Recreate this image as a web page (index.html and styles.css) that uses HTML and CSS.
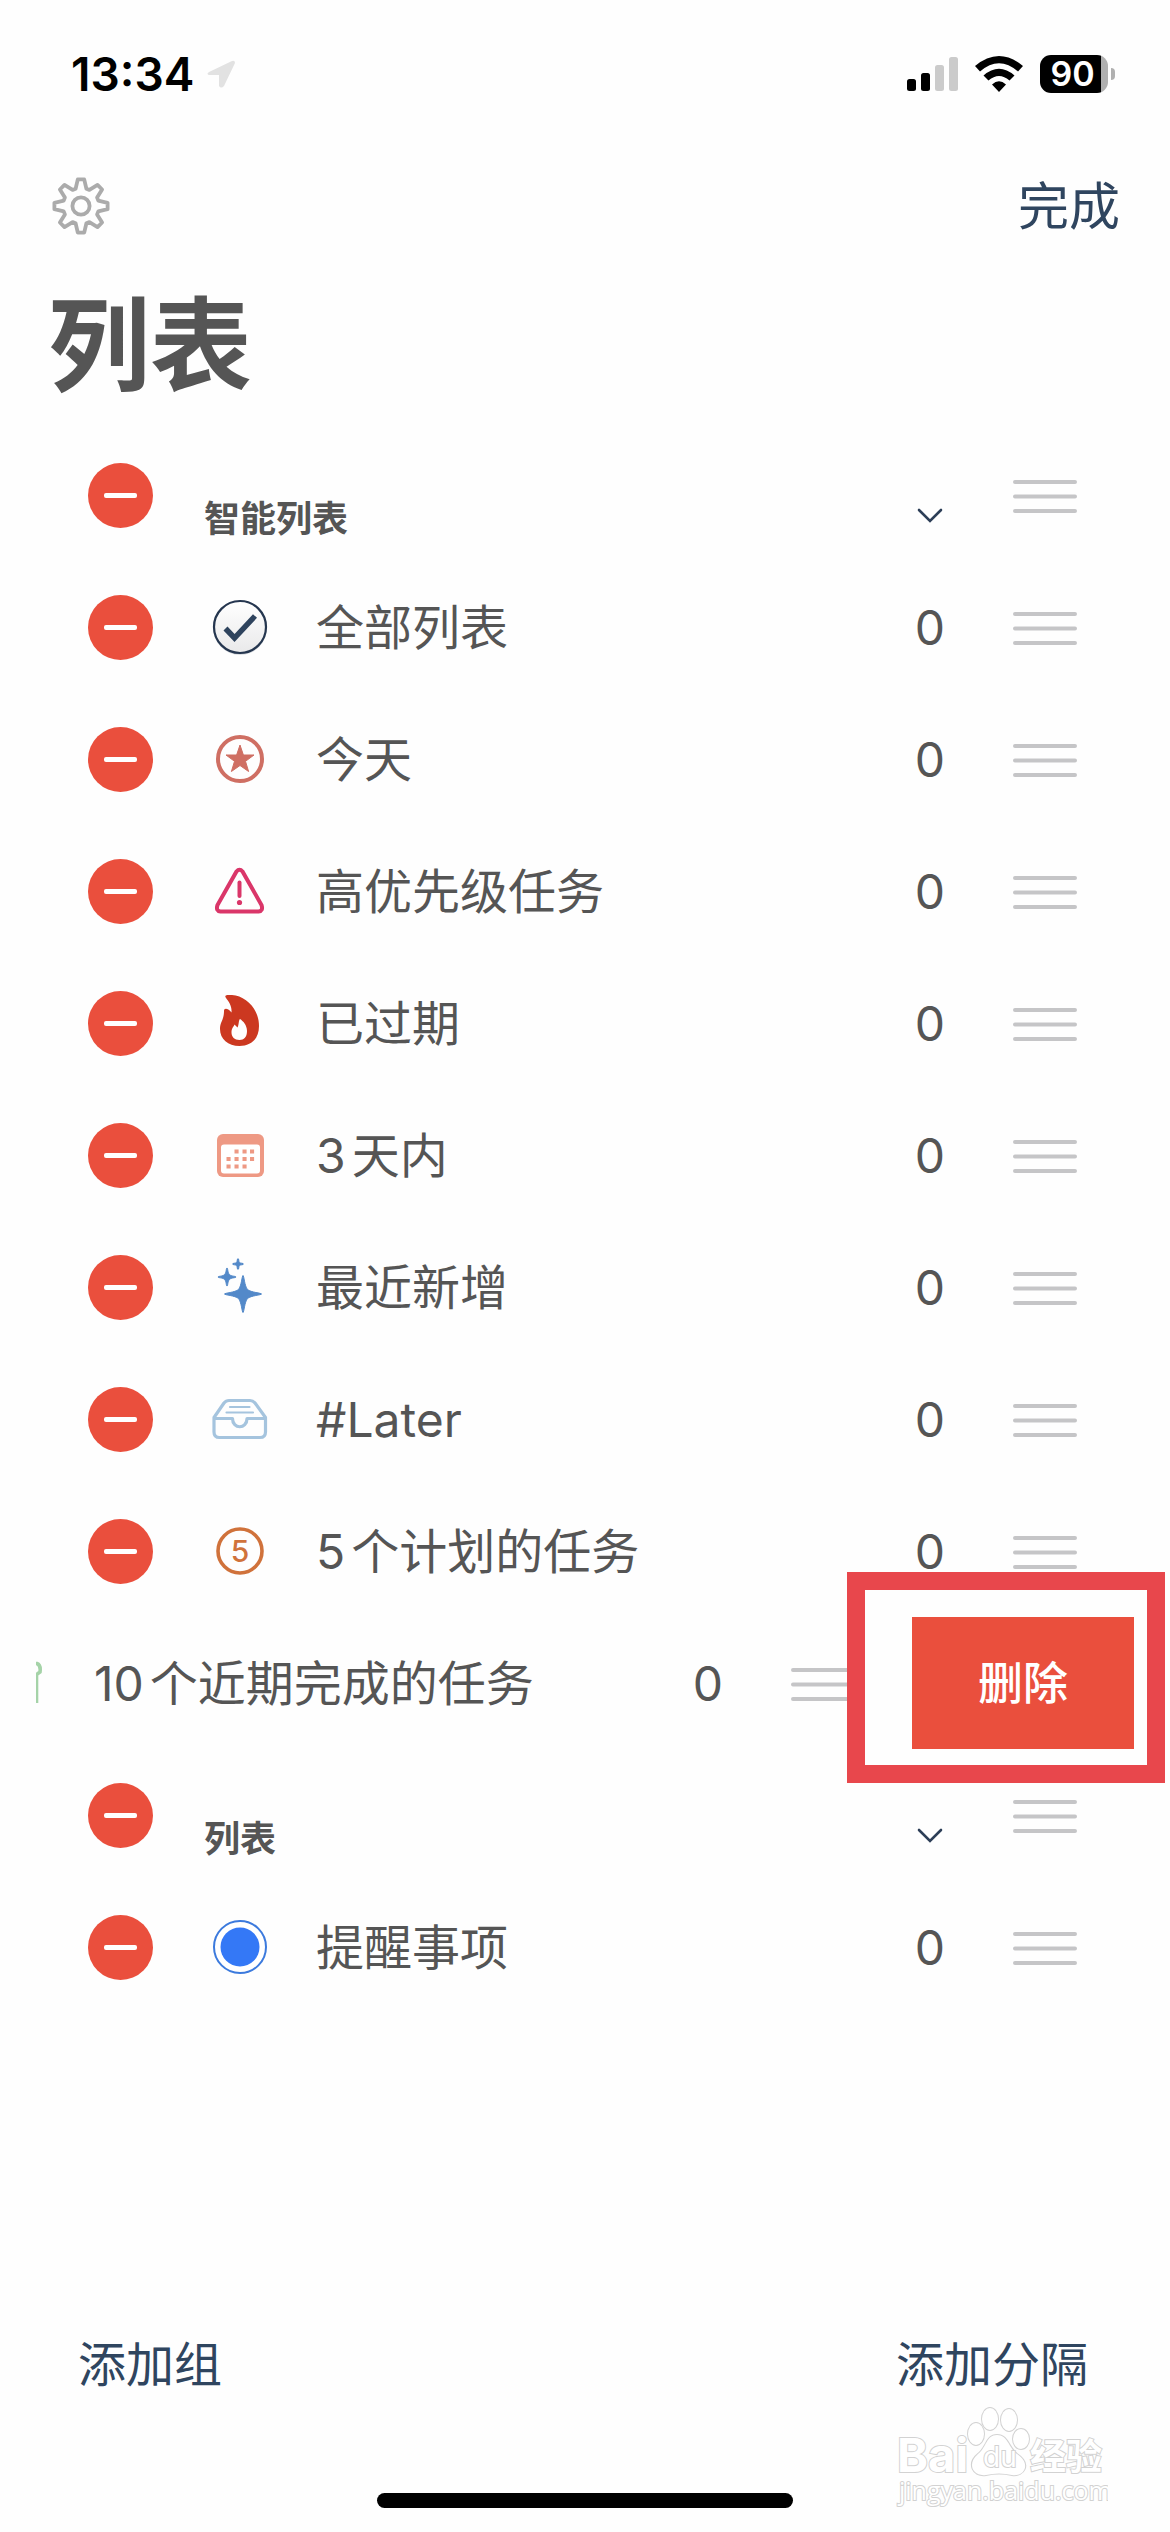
FILE: index.html
```html
<!DOCTYPE html>
<html lang="zh-CN">
<head>
<meta charset="utf-8">
<meta name="viewport" content="width=device-width, initial-scale=1">
<title>列表</title>
<link rel="stylesheet" href="styles.css">
</head>
<body>
<svg class="sprite" aria-hidden="true">
  <symbol id="minus" viewBox="0 0 65 65"><circle cx="32.5" cy="32.5" r="32.5" fill="#ea4f3d"/><rect x="16" y="30" width="33" height="5" rx="2" fill="#fff"/></symbol>
  <symbol id="grip" viewBox="0 0 64 34"><path d="M2 3H62M2 17.500H62M2 32H62" fill="none" stroke="#c5c5c7" stroke-width="4" stroke-linecap="round"/></symbol>
  <symbol id="chevron" viewBox="0 0 26 16"><path d="M2 2 13 13 24 2" fill="none" stroke="#2c3e57" stroke-width="2.600" stroke-linecap="round"/></symbol>
</svg>

<header class="status">
  <div class="status-left">
    <time class="clock">13:34</time>
    <svg class="location" viewBox="0 0 28 28" aria-hidden="true"><path d="M25 1 2 12Q-1 14 2 15H12V26Q14 29 17 26L28 3Q28 0 25 1Z" fill="#e2e2e2"/></svg>
  </div>
  <div class="status-right">
    <svg class="signal" viewBox="0 0 51 34" aria-hidden="true"><rect y="22" width="9" height="12" rx="2.500"/><rect x="14" y="16" width="9" height="18" rx="2.500"/><g fill="#cbcbcb"><rect x="28" y="8" width="9" height="26" rx="2.500"/><rect x="42" width="9" height="34" rx="2.500"/></g></svg>
    <svg class="wifi" viewBox="0 0 48 36" aria-hidden="true"><path d="M0 10Q24-10 48 10L43 15.500Q24-1 5 15.500ZM8.500 19.500Q24 6 39.500 19.500L34.500 24.500Q24 15.500 13.500 24.500ZM17 28.500Q24 22 31 28.500L24 36Z"/></svg>
    <div class="battery"><span class="battery-body">90</span><span class="battery-tip"></span></div>
  </div>
</header>

<nav class="toolbar">
  <button class="icon-button" type="button" aria-label="设置">
    <svg class="gear" viewBox="-29 -29 58 58"><g fill="none" stroke="#ababab" stroke-width="3.800" stroke-linejoin="round"><circle r="8.600"/><path d="M-3.200-26.600 3.200-26.600 5.400-17.300 8.400-16.100 16.500-21.100 21.100-16.500 16.100-8.400 17.300-5.400 26.600-3.200 26.600 3.200 17.300 5.400 16.100 8.400 21.100 16.500 16.500 21.100 8.400 16.100 5.400 17.300 3.200 26.600-3.200 26.600-5.400 17.300-8.400 16.100-16.500 21.100-21.100 16.500-16.100 8.400-17.300 5.400-26.600 3.200-26.600-3.200-17.300-5.400-16.100-8.400-21.100-16.500-16.500-21.100-8.400-16.100-5.400-17.300Z"/></g></svg>
  </button>
  <button class="text-button done" type="button">完成</button>
</nav>

<main>
  <h1 class="page-title">列表</h1>
  <ul class="lists">
    <li class="row group">
      <button class="remove" type="button" aria-label="删除 智能列表"><svg><use href="#minus"/></svg></button>
      <h2 class="group-name">智能列表</h2>
      <button class="fold" type="button" aria-label="折叠"><svg><use href="#chevron"/></svg></button>
      <svg class="grip" aria-hidden="true"><use href="#grip"/></svg>
    </li>
    <li class="row">
      <button class="remove" type="button" aria-label="删除 全部列表"><svg><use href="#minus"/></svg></button>
      <svg class="icon" viewBox="0 0 60 60" aria-hidden="true"><defs><linearGradient id="disc" x2="0" y2="1"><stop stop-color="#fff"/><stop offset="1" stop-color="#e9e9ea"/></linearGradient></defs><circle cx="30" cy="31" r="27" fill="#d9dce0"/><circle cx="30" cy="30" r="26" fill="url(#disc)" stroke="#25364f" stroke-width="2.200"/><path d="M15.500 31.500 24.500 41 45 19" fill="none" stroke="#2e435d" stroke-width="5.500"/></svg>
      <span class="name">全部列表</span><span class="count">0</span>
      <svg class="grip" aria-hidden="true"><use href="#grip"/></svg>
    </li>
    <li class="row">
      <button class="remove" type="button" aria-label="删除 今天"><svg><use href="#minus"/></svg></button>
      <svg class="icon" viewBox="0 0 60 60" aria-hidden="true"><circle cx="30" cy="30" r="22" fill="none" stroke="#cf6f63" stroke-width="4"/><path d="M30 16 33.400 26H44L35.500 32.300 38.600 42.500 30 36.500 21.400 42.500 24.500 32.300 16 26H26.600Z" fill="#cf6f63" stroke="#cf6f63" stroke-linejoin="round"/></svg>
      <span class="name">今天</span><span class="count">0</span>
      <svg class="grip" aria-hidden="true"><use href="#grip"/></svg>
    </li>
    <li class="row">
      <button class="remove" type="button" aria-label="删除 高优先级任务"><svg><use href="#minus"/></svg></button>
      <svg class="icon" viewBox="0 0 60 60" aria-hidden="true"><g fill="none" stroke="#da3669" stroke-width="4" stroke-linecap="round"><path d="M26.500 10.500Q29.500 7 32.500 10.500L51.500 44Q53.500 50 48.500 50.500H10.500Q5.500 50 7.500 44Z"/><path d="M29.500 21.500V35"/></g><circle cx="29.500" cy="41.500" r="2.600" fill="#da3669"/></svg>
      <span class="name">高优先级任务</span><span class="count">0</span>
      <svg class="grip" aria-hidden="true"><use href="#grip"/></svg>
    </li>
    <li class="row">
      <button class="remove" type="button" aria-label="删除 已过期"><svg><use href="#minus"/></svg></button>
      <svg class="icon" viewBox="0 0 60 60" aria-hidden="true"><path d="M16 5C13 1 20 2 22 2C36 3 49 16 49 33C49 46 41 53 29.500 53C18 53 10 46 10 36C10 29 14 27 14 18C14 14 19 16 21.500 19.500C22 13 19 9 16 5Z" fill="#cc3820"/><path d="M30 26C33 28 37 32 37 38C37 44 34 47 29.500 47C24.500 47 21.500 44 21.500 39.500C21.500 35 23.500 34 24.500 31.500L27.500 34.500C29 32 28.500 27 30 26Z" fill="#fff"/></svg>
      <span class="name">已过期</span><span class="count">0</span>
      <svg class="grip" aria-hidden="true"><use href="#grip"/></svg>
    </li>
    <li class="row">
      <button class="remove" type="button" aria-label="删除 3天内"><svg><use href="#minus"/></svg></button>
      <svg class="icon" viewBox="0 0 60 60" aria-hidden="true"><rect x="7" y="9" width="47" height="43" rx="6" fill="#ee9984"/><rect x="11" y="19.500" width="39" height="29" rx="3" fill="#fff"/><path d="M26.500 26.500h.1M34.500 26.500h.1M42 26.500h.1M18.500 34h.1M26.500 34h.1M34.500 34h.1M42 34h.1M18.500 41.500h.1M26.500 41.500h.1M34.500 41.500h.1" stroke="#ee9984" stroke-width="4" stroke-linecap="square"/></svg>
      <span class="name">3天内</span><span class="count">0</span>
      <svg class="grip" aria-hidden="true"><use href="#grip"/></svg>
    </li>
    <li class="row">
      <button class="remove" type="button" aria-label="删除 最近新增"><svg><use href="#minus"/></svg></button>
      <svg class="icon" viewBox="0 0 60 60" aria-hidden="true"><path d="M33 18.500C34 18.500 34.500 29 37.500 32.500C41 35.500 51.500 36 51.500 37C51.500 38 41 38.500 37.500 41.500C34.500 45 34 55.500 33 55.500C32 55.500 31.500 45 28.500 41.500C25 38.500 14.500 38 14.500 37C14.500 36 25 35.500 28.500 32.500C31.500 29 32 18.500 33 18.500ZM17 11C18 11 17.500 16 19.500 17.500C21 19.500 26 19 26 20C26 21 21 20.500 19.500 22.500C17.500 24 18 29 17 29C16 29 16.500 24 14.500 22.500C13 20.500 8 21 8 20C8 19 13 19.500 14.500 17.500C16.500 16 16 11 17 11ZM28 1.500C29 1.500 28.500 4.500 29.500 5.500C30.500 6.500 33.500 6 33.500 7C33.500 8 30.500 7.500 29.500 8.500C28.500 9.500 29 12.500 28 12.500C27 12.500 27.500 9.500 26.500 8.500C25.500 7.500 22.500 8 22.500 7C22.500 6 25.500 6.500 26.500 5.500C27.500 4.500 27 1.500 28 1.500Z" fill="#5389c9" stroke="#5389c9"/></svg>
      <span class="name">最近新增</span><span class="count">0</span>
      <svg class="grip" aria-hidden="true"><use href="#grip"/></svg>
    </li>
    <li class="row">
      <button class="remove" type="button" aria-label="删除 #Later"><svg><use href="#minus"/></svg></button>
      <svg class="icon" viewBox="0 0 60 60" aria-hidden="true"><g fill="none" stroke="#a5c4de" stroke-linecap="round" stroke-linejoin="round"><path d="M4 28.500 14 14Q16 11.500 19 11.500H40Q43 11.500 45 14L55.500 28.500V43Q55.500 48.500 50 48.500H9.500Q4 48.500 4 43ZM4 29.500H22.500C22.500 40.500 37 40.500 37 29.500H55.500" stroke-width="3.200"/><path d="M20 18H39.500M16.500 23.500H43" stroke-width="2.200"/></g></svg>
      <span class="name">#Later</span><span class="count">0</span>
      <svg class="grip" aria-hidden="true"><use href="#grip"/></svg>
    </li>
    <li class="row">
      <button class="remove" type="button" aria-label="删除 5个计划的任务"><svg><use href="#minus"/></svg></button>
      <svg class="icon" viewBox="0 0 60 60" aria-hidden="true"><circle cx="30" cy="30" r="22" fill="none" stroke="#d0723b" stroke-width="3.600"/><text x="30" y="41" text-anchor="middle" class="numeral">5</text></svg>
      <span class="name">5个计划的任务</span><span class="count">0</span>
      <svg class="grip" aria-hidden="true"><use href="#grip"/></svg>
    </li>
    <li class="swipe">
      <div class="swipe-track">
        <div class="row">
          <button class="remove" type="button" aria-label="删除 10个近期完成的任务"><svg><use href="#minus"/></svg></button>
          <svg class="icon" viewBox="0 0 60 60" aria-hidden="true"><path d="M44 10.500H49Q53 12 52 19L48.500 21.500V50" fill="none" stroke="#a5d3a8" stroke-width="3.600"/></svg>
          <span class="name">10个近期完成的任务</span><span class="count">0</span>
          <svg class="grip" aria-hidden="true"><use href="#grip"/></svg>
        </div>
        <button class="delete" type="button">删除</button>
      </div>
      <div class="marker" aria-hidden="true"></div>
    </li>
    <li class="row group">
      <button class="remove" type="button" aria-label="删除 列表"><svg><use href="#minus"/></svg></button>
      <h2 class="group-name">列表</h2>
      <button class="fold" type="button" aria-label="折叠"><svg><use href="#chevron"/></svg></button>
      <svg class="grip" aria-hidden="true"><use href="#grip"/></svg>
    </li>
    <li class="row">
      <button class="remove" type="button" aria-label="删除 提醒事项"><svg><use href="#minus"/></svg></button>
      <svg class="icon" viewBox="0 0 60 60" aria-hidden="true"><circle cx="30" cy="30" r="26" fill="#fff" stroke="#3c7add" stroke-width="2"/><circle cx="30" cy="30" r="19.500" fill="#3478f6"/></svg>
      <span class="name">提醒事项</span><span class="count">0</span>
      <svg class="grip" aria-hidden="true"><use href="#grip"/></svg>
    </li>
  </ul>
</main>

<footer class="actions">
  <button class="text-button" type="button">添加组</button>
  <button class="text-button" type="button">添加分隔</button>
</footer>
<div class="home-indicator"></div>

<svg class="watermark" viewBox="0 0 212 110" role="img" aria-label="Baidu 经验">
  <g class="outline">
    <text x="1" y="66" class="brand">Bai</text>
    <text x="134" y="64" class="brand-cjk">经验</text>
    <ellipse cx="80" cy="28" rx="8" ry="11"/><ellipse cx="94" cy="13" rx="8" ry="11"/><ellipse cx="113" cy="14" rx="8" ry="11"/><ellipse cx="125" cy="33" rx="8" ry="10"/>
    <path d="M101 29C112 29 112 41 121 48C136 58 128 71 116 69Q103 66 90 69C76 71 71 57 82 48C91 41 90 29 101 29Z"/>
    <text x="87" y="61" class="brand-du">du</text>
    <text x="3" y="94" class="address">jingyan.baidu.com</text>
  </g>
</svg>
</body>
</html>
```
FILE: styles.css
```css
*, *::before, *::after { box-sizing: border-box; }

body {
  position: relative;
  display: flex;
  flex-direction: column;
  min-height: 100vh;
  margin: 0;
  background: #fefefe;
  color: #555;
  font-family: Inter, "Noto Sans CJK SC", sans-serif;
  font-size: 48px;
  line-height: 60px;
  text-autospace: normal;
}

button {
  padding: 0;
  border: 0;
  background: none;
  color: inherit;
  font: inherit;
}

svg { display: block; flex: none; }
.sprite { position: absolute; width: 0; height: 0; }

/* Status bar */
.status {
  display: flex;
  align-items: center;
  justify-content: space-between;
  height: 148px;
  padding: 0 55px 0 71px;
  color: #000;
}
.status-left, .status-right, .battery { display: flex; align-items: center; }
.status-left { gap: 13px; }
.clock { font-size: 46px; font-weight: 600; }
.location { width: 28px; height: 28px; }
.status-right { gap: 17px; }
.signal { width: 51px; height: 34px; }
.wifi { width: 48px; height: 36px; }
.battery { gap: 3px; }
.battery-body {
  width: 68px;
  height: 38px;
  padding-right: 3px;
  border-radius: 11px;
  background: linear-gradient(90deg, #000 61px, #b0b0b0 61px);
  color: #fff;
  font-size: 34px;
  font-weight: 600;
  line-height: 38px;
  text-align: center;
}
.battery-tip { width: 4px; height: 12px; border-radius: 0 6px 6px 0; background: #b0b0b0; }

/* Toolbar and heading */
.toolbar {
  display: flex;
  align-items: center;
  justify-content: space-between;
  height: 116px;
  padding: 0 50px 0 52px;
}
.gear { width: 58px; height: 58px; }
.text-button { padding-top: 2px; color: #2f455f; }
.done { font-size: 51px; }
.page-title {
  margin: 0;
  padding: 0 48px;
  font-size: 102px;
  font-weight: 700;
  line-height: 165px;
}

/* Rows */
.lists { margin: 0; padding: 0 36px; list-style: none; }
.row {
  display: flex;
  align-items: center;
  height: 132px;
  padding: 0 57px 0 52px;
}
.remove, .remove svg { width: 65px; height: 65px; }
.icon { width: 60px; height: 60px; margin-left: 57px; }
.name { flex: 1; margin-left: 46px; white-space: nowrap; }
.count { width: 60px; text-align: center; }
.grip { width: 64px; height: 34px; margin-left: 53px; }
.name, .count, .grip { margin-top: 2px; }
.numeral { fill: #d0723b; font-size: 30px; font-weight: 500; }

.group-name {
  flex: 1;
  margin: 0 0 0 51px;
  padding-top: 48px;
  font-size: 36px;
  font-weight: 700;
  line-height: 44px;
}
.fold { display: grid; place-items: center; width: 60px; height: 60px; padding-top: 42px; }
.fold svg { width: 26px; height: 16px; }

/* Row swiped open to uncover its delete action */
.swipe { position: relative; }
.swipe-track { display: flex; justify-content: flex-end; overflow: hidden; }
.swipe-track .row { flex: 0 0 100%; }
.delete {
  flex: 0 0 222px;
  padding-top: 2px;
  background: #ea4f3d;
  color: #fff;
  font-size: 45px;
  font-weight: 500;
}
.marker {
  position: absolute;
  top: -45px;
  right: -31px;
  width: 318px;
  height: 211px;
  border: 18px solid #e8474c;
  pointer-events: none;
}

/* Bottom actions */
.actions {
  display: flex;
  justify-content: space-between;
  margin-top: auto;
  padding: 0 82px 98px 78px;
}
.home-indicator {
  align-self: center;
  width: 416px;
  height: 15px;
  margin-bottom: 24px;
  border-radius: 8px;
  background: #000;
}

.watermark {
  position: absolute;
  right: 62px;
  bottom: 16px;
  width: 212px;
  height: 110px;
}
.outline { fill: #fff; stroke: #d2d2d2; stroke-width: 2; paint-order: stroke; }
.brand { font-size: 47px; font-weight: 700; }
.brand-cjk { font-size: 36px; font-weight: 700; }
.brand-du { font-size: 28px; }
.address { font-family: "Open Sans", sans-serif; font-size: 25px; }
```
